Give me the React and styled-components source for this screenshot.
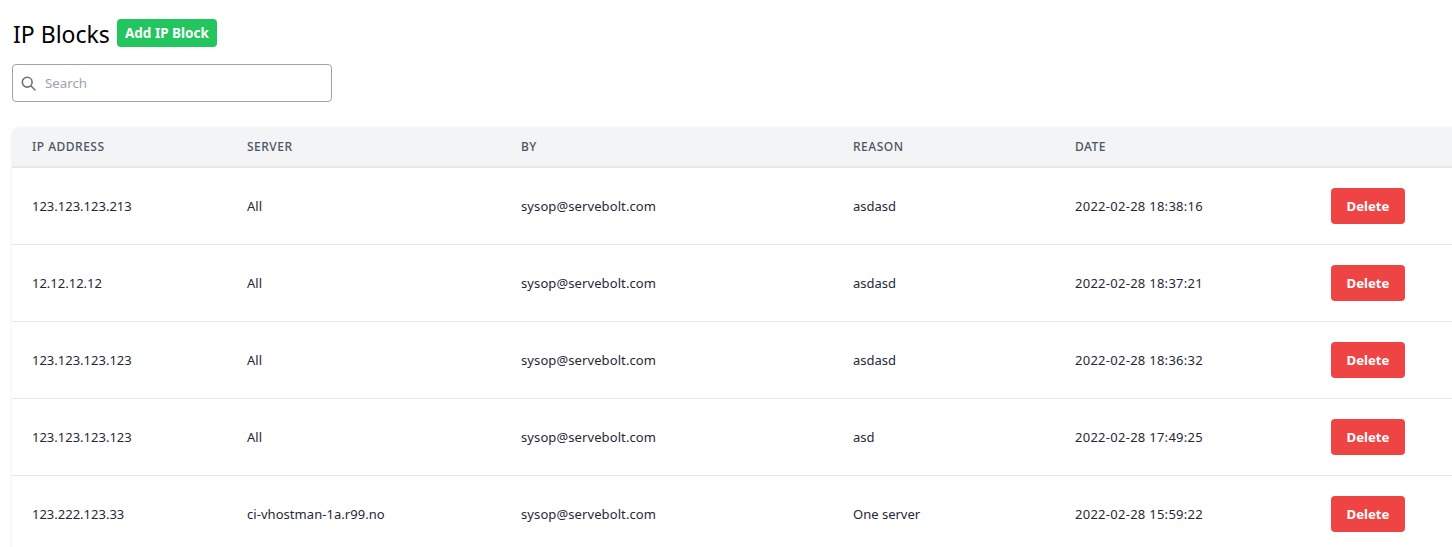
import React from 'react'
import styled, { createGlobalStyle } from 'styled-components'

const GlobalStyle = createGlobalStyle`
    html, body {
        margin:0;
        height:100%;
        overflow:hidden;
        background:#fff;
    }
    body {
        font-family:"Noto Sans","Open Sans",sans-serif;
        color:#111827;
    }
`

const Page = styled.div`
    padding:19px 0 0 12px;
`

const Header = styled.div`
    display:flex;
    align-items:flex-start;
    gap:8px;
`

const Title = styled.h1`
    margin:0;
    padding-left:1px;
    width:96px;
    font-size:23px;
    line-height:30px;
    font-weight:400;
    white-space:nowrap;
    color:#000;
`

const AddButton = styled.button`
    height:28px;
    padding:0 8px;
    border:none;
    border-radius:4px;
    background:#22c55e;
    color:#fff;
    font-family:inherit;
    font-size:13.5px;
    font-weight:700;
`

const SearchBox = styled.div`
    display:flex;
    align-items:center;
    gap:9px;
    box-sizing:border-box;
    width:320px;
    height:38px;
    margin-top:15px;
    padding:0 8px;
    border:1px solid #9ca3af;
    border-radius:4px;
    color:#6b7280;
`

const SearchIcon = styled.svg`
    width:15px;
    height:15px;
    flex:none;
    fill:none;
    stroke:currentColor;
    stroke-width:1.6;
    stroke-linecap:round;
`

const SearchInput = styled.input`
    flex:1;
    min-width:0;
    border:none;
    outline:none;
    padding:0;
    font-family:inherit;
    font-size:13.3px;
    color:#111827;
    &::placeholder { color:#9ca3af; opacity:1; }
`

const Table = styled.div`
    width:1480px;
    margin-top:25px;
    border-radius:8px 0 0 0;
    box-shadow:0 1px 3px rgba(0,0,0,0.1);
`

const columns = '215px 274px 332px 222px 256px 1fr'

const HeadRow = styled.div`
    display:grid;
    grid-template-columns:${columns};
    align-items:center;
    box-sizing:border-box;
    height:41px;
    border-bottom:2px solid #e5e7eb;
    border-radius:8px 0 0 0;
    background:#f3f4f6;
`

const HeadCell = styled.div`
    padding-left:20px;
    font-size:12px;
    font-weight:500;
    letter-spacing:0.5px;
    text-transform:uppercase;
    color:#4b5563;
`

const Row = styled.div`
    display:grid;
    grid-template-columns:${columns};
    align-items:center;
    box-sizing:border-box;
    height:77px;
    border-bottom:1px solid #e5e7eb;
`

const Cell = styled.div`
    padding-left:20px;
    font-size:13px;
    line-height:20px;
    letter-spacing:${props => props.$spacing || '0'};
    color:#1f2937;
`

const DeleteButton = styled.button`
    display:block;
    width:74px;
    height:36px;
    padding:0;
    border:none;
    border-radius:4px;
    background:#ef4444;
    color:#fff;
    font-family:inherit;
    font-size:13.2px;
    font-weight:700;
`

const blocks = [
    ['123.123.123.213', 'All', 'asdasd', '2022-02-28 18:38:16'],
    ['12.12.12.12', 'All', 'asdasd', '2022-02-28 18:37:21'],
    ['123.123.123.123', 'All', 'asdasd', '2022-02-28 18:36:32'],
    ['123.123.123.123', 'All', 'asd', '2022-02-28 17:49:25'],
    ['123.222.123.33', 'ci-vhostman-1a.r99.no', 'One server', '2022-02-28 15:59:22'],
]

function App() {
    return (
        <Page>
            <GlobalStyle />
            <Header>
                <Title>IP Blocks</Title>
                <AddButton>Add IP Block</AddButton>
            </Header>
            <SearchBox>
                <SearchIcon viewBox="0 0 15 15">
                    <circle cx="6.2" cy="6.2" r="4.9" />
                    <path d="M10 10l4 4" />
                </SearchIcon>
                <SearchInput placeholder="Search" />
            </SearchBox>
            <Table>
                <HeadRow>
                    <HeadCell>IP Address</HeadCell>
                    <HeadCell>Server</HeadCell>
                    <HeadCell>By</HeadCell>
                    <HeadCell>Reason</HeadCell>
                    <HeadCell>Date</HeadCell>
                    <HeadCell />
                </HeadRow>
                {blocks.map(([ip, server, reason, date], i) => (
                    <Row key={i}>
                        <Cell>{ip}</Cell>
                        <Cell $spacing="0.05px">{server}</Cell>
                        <Cell $spacing="0.1px">sysop@servebolt.com</Cell>
                        <Cell>{reason}</Cell>
                        <Cell $spacing="0.27px">{date}</Cell>
                        <Cell>
                            <DeleteButton>Delete</DeleteButton>
                        </Cell>
                    </Row>
                ))}
            </Table>
        </Page>
    )
}

export default App
